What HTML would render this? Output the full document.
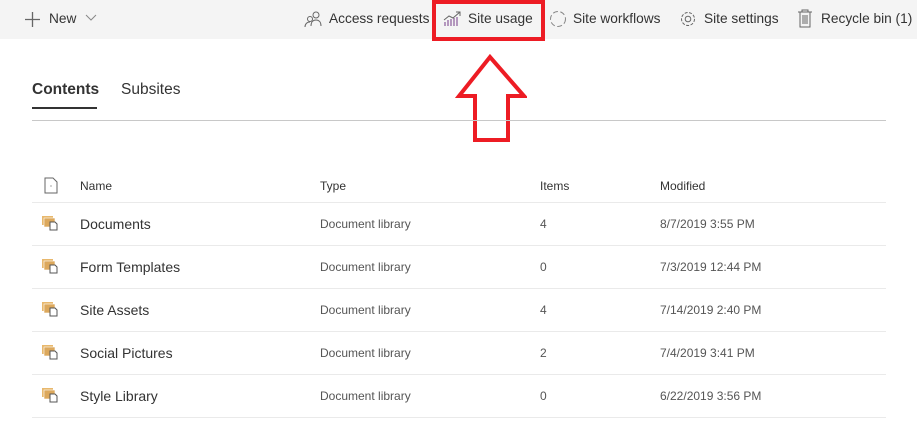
<!DOCTYPE html>
<html><head><meta charset="utf-8"><style>
*{margin:0;padding:0;box-sizing:border-box}
body{width:917px;height:423px;background:#fff;font-family:"Liberation Sans",sans-serif;color:#333;position:relative;overflow:hidden}
.bar{position:absolute;left:0;top:0;width:917px;height:39px;background:#f4f4f4}
.t{position:absolute;font-size:13.7px;color:#333;white-space:nowrap}
.s{position:absolute;font-size:12px;color:#555;white-space:nowrap}
.n{position:absolute;font-size:14px;color:#333;white-space:nowrap}
.hl{position:absolute;height:1px;background:#eaeaea;left:32px;width:854px}
</style></head><body>
<div class="bar"></div>
<svg style="position:absolute;left:24px;top:11px" width="17" height="17"><path d="M8.5 1v15M1 8.5h15" stroke="#666" stroke-width="1.3"/></svg>
<div class="t" style="left:49px;top:11px">New</div>
<svg style="position:absolute;left:85px;top:14px" width="12" height="8"><path d="M1 1l5 5 5-5" stroke="#888" fill="none"/></svg>
<svg style="position:absolute;left:304px;top:10px" width="18" height="18"><circle cx="12" cy="5" r="3" fill="none" stroke="#666"/><path d="M7 16c0-4 2-6 5-6s5 2 5 6" fill="none" stroke="#666"/><circle cx="6" cy="9" r="2.5" fill="none" stroke="#666"/><path d="M1 17c0-3 2-5 5-5" fill="none" stroke="#666"/></svg>
<div class="t" style="left:329px;top:11px">Access requests</div>
<svg style="position:absolute;left:443px;top:11px" width="18" height="16"><path d="M2 15v-4M5 15v-6M8 15v-7M11 15v-8M14 15v-9" stroke="#8a5a9a" stroke-width="1.2"/><path d="M1 9l5-4 4 2 7-6M13 1h4v4" stroke="#666" fill="none"/></svg>
<div class="t" style="left:468px;top:11px">Site usage</div>
<div style="position:absolute;left:432px;top:0;width:113px;height:41px;border:4px solid #ed1c24"></div>
<svg style="position:absolute;left:549px;top:10px" width="18" height="18"><circle cx="9" cy="9" r="7.5" fill="none" stroke="#888" stroke-dasharray="5 2.5"/></svg>
<div class="t" style="left:573px;top:11px">Site workflows</div>
<svg style="position:absolute;left:679px;top:10px" width="18" height="18"><circle cx="9" cy="9" r="2.8" fill="none" stroke="#666"/><circle cx="9" cy="9" r="6.5" fill="none" stroke="#666" stroke-dasharray="3 1.5"/></svg>
<div class="t" style="left:704px;top:11px">Site settings</div>
<svg style="position:absolute;left:797px;top:9px" width="16" height="19"><path d="M1 3h14M5 3V1h6v2M3 3v15h10V3M6 6v9M8 6v9M10 6v9" stroke="#666" fill="none"/></svg>
<div class="t" style="left:821px;top:11px">Recycle bin (1)</div>
<svg style="position:absolute;left:455px;top:54px" width="72" height="88"><path d="M35 3L4 42h16v44h33V42h16z" fill="none" stroke="#ed1c24" stroke-width="4"/></svg>
<div class="t" style="left:32px;top:81px;font-size:15.5px;font-weight:bold;color:#333">Contents</div>
<div style="position:absolute;left:32px;top:107px;width:65px;height:2px;background:#333"></div>
<div class="t" style="left:121px;top:81px;font-size:15.5px">Subsites</div>
<div style="position:absolute;left:32px;top:120px;width:854px;height:1px;background:#c8c8c8"></div>
<svg style="position:absolute;left:44px;top:177px" width="14" height="17"><path d="M1 1h8l4 4v11H1z" fill="none" stroke="#666"/><circle cx="7" cy="9" r=".6" fill="#666"/></svg>
<div class="s" style="left:80px;top:179px;color:#333">Name</div>
<div class="s" style="left:320px;top:179px;color:#333">Type</div>
<div class="s" style="left:540px;top:179px;color:#333">Items</div>
<div class="s" style="left:660px;top:179px;color:#333">Modified</div>
<div class="hl" style="top:202px"></div>
<div id="rows"></div>
<script>
var r=[["Documents","4","8/7/2019 3:55 PM"],["Form Templates","0","7/3/2019 12:44 PM"],["Site Assets","4","7/14/2019 2:40 PM"],["Social Pictures","2","7/4/2019 3:41 PM"],["Style Library","0","6/22/2019 3:56 PM"]];
var h="";r.forEach(function(x,i){var y=216+i*43;
h+='<svg style="position:absolute;left:41px;top:'+(y-1)+'px" width="18" height="16"><rect x="1" y="1" width="11" height="9" fill="#e8b86d"/><rect x="3" y="3" width="11" height="9" fill="#dca85c" stroke="#fff" stroke-width=".6"/><path d="M9 7h5l2 2v6H9z" fill="#fff" stroke="#555"/></svg>';
h+='<div class="n" style="left:80px;top:'+y+'px">'+x[0]+'</div><div class="s" style="left:320px;top:'+(y+1)+'px">Document library</div><div class="s" style="left:540px;top:'+(y+1)+'px">'+x[1]+'</div><div class="s" style="left:660px;top:'+(y+1)+'px">'+x[2]+'</div><div class="hl" style="top:'+(y+29)+'px"></div>';});
document.getElementById("rows").innerHTML=h;
</script>
</body></html>
